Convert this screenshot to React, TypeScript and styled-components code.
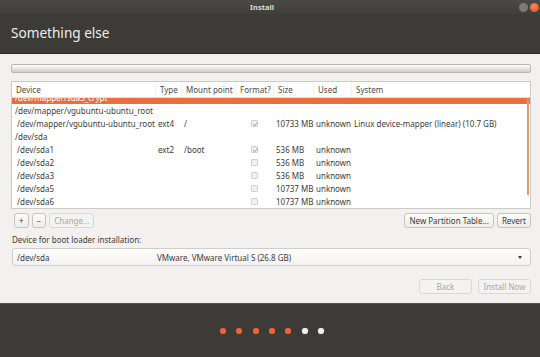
import { useLayoutEffect, useRef } from 'react'
import styled, { createGlobalStyle } from 'styled-components'

const GlobalStyle = createGlobalStyle`
  html, body {
    margin: 0;
    padding: 0;
    background: #3c3b37;
  }
  * {
    box-sizing: border-box;
  }
`

const Window = styled.div`
  width: 540px;
  height: 357px;
  display: flex;
  flex-direction: column;
  font-family: 'Noto Sans', 'Liberation Sans', sans-serif;
  overflow: hidden;
`

const TitleBar = styled.div`
  position: relative;
  height: 14px;
  display: flex;
  align-items: center;
  justify-content: center;
  padding-right: 16px;
  background: linear-gradient(#4a4945, #403f3b);
  color: #dfdbd2;
  font-size: 7.5px;
  font-weight: bold;
`

const WinButtons = styled.div`
  position: absolute;
  right: 1px;
  top: 2.5px;
  display: flex;
  gap: 2px;
`

const WinDot = styled.span<{ $close?: boolean }>`
  width: 9px;
  height: 9px;
  border-radius: 50%;
  background: ${p => (p.$close ? 'radial-gradient(circle at 40% 35%, #f48a5c, #d9491c)' : '#7b7a76')};
`

const Header = styled.div`
  height: 40px;
  display: flex;
  align-items: center;
  padding: 0 0 2px 11px;
  background: #3c3b37;
  color: #efeeea;
  font-size: 13.6px;
  border-bottom: 1px solid #2c2b28;
`

const Content = styled.div`
  flex: 1;
  background: #f2f1f0;
  padding: 10px 9px 0 11px;
  display: flex;
  flex-direction: column;
`

const PartBar = styled.div`
  height: 9px;
  border: 1px solid #b8b6b2;
  border-radius: 2px;
  background: linear-gradient(#ffffff, #e8e7e5 50%, #cfcdc9);
  margin-bottom: 8px;
`

const Table = styled.div`
  position: relative;
  height: 128px;
  background: #ffffff;
  border: 1px solid #cdcbc8;
  display: flex;
  flex-direction: column;
  font-size: 8px;
  color: #3c3c3c;
`

const cols = '143px 26px 54px 38px 40px 38px 1fr'

const HeadRow = styled.div`
  display: grid;
  grid-template-columns: ${cols};
  height: 16px;
  align-items: center;
  border-bottom: 1px solid #e3e1de;
  color: #4c4c4c;
`

const HeadCell = styled.div<{ $sep?: boolean }>`
  padding-left: 4px;
  height: 100%;
  display: flex;
  align-items: center;
  border-left: ${p => (p.$sep ? '1px solid #f1f0ee' : 'none')};
`

const Body = styled.div`
  flex: 1;
  overflow: hidden;
`

const Row = styled.div<{ $selected?: boolean }>`
  display: grid;
  grid-template-columns: ${cols};
  height: 13px;
  align-items: center;
  background: ${p => (p.$selected ? '#e9703e' : 'transparent')};
  color: ${p => (p.$selected ? '#ffffff' : '#3c3c3c')};
  white-space: nowrap;
`

const Cell = styled.div<{ $indent?: boolean }>`
  padding-left: ${p => (p.$indent ? '5px' : '3px')};
  overflow: visible;
`

const Check = styled.span<{ $checked?: boolean }>`
  display: block;
  margin-left: 13px;
  width: 7px;
  height: 7px;
  border: 1px solid #d4d2cf;
  border-radius: 1px;
  background: #f1f0ef;
  position: relative;
  &::after {
    content: ${p => (p.$checked ? "''" : 'none')};
    position: absolute;
    left: 1.5px;
    top: 0px;
    width: 2px;
    height: 3.5px;
    border: solid #b4b2ae;
    border-width: 0 1px 1px 0;
    transform: rotate(40deg);
  }
`

const ScrollThumb = styled.div`
  position: absolute;
  right: 1px;
  top: 17px;
  width: 2px;
  height: 96px;
  background: #e39a73;
`

const ButtonRow = styled.div`
  display: flex;
  align-items: center;
  gap: 3px;
  padding: 4px 0 0 3px;
`

const Spacer = styled.div`
  flex: 1;
`

const Button = styled.button<{ $w?: number; $disabled?: boolean }>`
  height: 15px;
  min-width: ${p => (p.$w ? `${p.$w}px` : 'auto')};
  padding: 0 4px;
  font-family: inherit;
  font-size: 8px;
  color: ${p => (p.$disabled ? '#a9a7a4' : '#3c3c3c')};
  border: 1px solid ${p => (p.$disabled ? '#dad8d5' : '#c6c4c0')};
  border-radius: 3px;
  background: ${p => (p.$disabled ? '#f4f3f2' : 'linear-gradient(#fbfbfa, #eeedeb)')};
  display: flex;
  align-items: center;
  justify-content: center;
`

const Label = styled.div`
  font-size: 8px;
  color: #3c3c3c;
  margin: 6px 0 3px 1px;
`

const Combo = styled.div`
  height: 18px;
  margin-left: 1px;
  border: 1px solid #d0ceca;
  border-radius: 3px;
  background: linear-gradient(#fdfdfc, #f3f2f1);
  display: grid;
  grid-template-columns: 140px 1fr 12px;
  align-items: center;
  font-size: 8px;
  color: #3c3c3c;
  padding-left: 4px;
`

const Arrow = styled.span`
  width: 0;
  height: 0;
  border-left: 2.5px solid transparent;
  border-right: 2.5px solid transparent;
  border-top: 3px solid #3c3c3c;
`

const NavRow = styled.div`
  display: flex;
  justify-content: flex-end;
  gap: 6px;
  margin-top: 13px;
`

const Footer = styled.div`
  height: 54px;
  background: #3c3b37;
  display: flex;
  justify-content: center;
  align-items: center;
  gap: 10.4px;
  padding: 0 0 0 4px;
  border-top: 1px solid #55544f;
`

const Dot = styled.span<{ $done?: boolean }>`
  width: 6px;
  height: 6px;
  border-radius: 50%;
  background: ${p => (p.$done ? '#e9673a' : '#eeeeec')};
  box-shadow: 0 0 1px ${p => (p.$done ? '#b2401a' : '#bbbbbb')};
`

type Part = {
  dev: string
  indent?: boolean
  type?: string
  mount?: string
  format?: 'on' | 'off'
  size?: string
  used?: string
  system?: string
  selected?: boolean
}

const parts: Part[] = [
  { dev: '/dev/mapper/sda3_crypt', selected: true },
  { dev: '/dev/mapper/vgubuntu-ubuntu_root' },
  {
    dev: '/dev/mapper/vgubuntu-ubuntu_root',
    indent: true,
    type: 'ext4',
    mount: '/',
    format: 'on',
    size: '10733 MB',
    used: 'unknown',
    system: 'Linux device-mapper (linear) (10.7 GB)',
  },
  { dev: '/dev/sda' },
  { dev: '/dev/sda1', indent: true, type: 'ext2', mount: '/boot', format: 'on', size: '536 MB', used: 'unknown' },
  { dev: '/dev/sda2', indent: true, format: 'off', size: '536 MB', used: 'unknown' },
  { dev: '/dev/sda3', indent: true, format: 'off', size: '536 MB', used: 'unknown' },
  { dev: '/dev/sda5', indent: true, format: 'off', size: '10737 MB', used: 'unknown' },
  { dev: '/dev/sda6', indent: true, format: 'off', size: '10737 MB', used: 'unknown' },
]

const headers = ['Device', 'Type', 'Mount point', 'Format?', 'Size', 'Used', 'System']

function PartitionTable() {
  const bodyRef = useRef<HTMLDivElement>(null)

  useLayoutEffect(() => {
    if (bodyRef.current) bodyRef.current.scrollTop = 7
  }, [])

  return (
    <Table>
      <HeadRow>
        {headers.map((h, i) => (
          <HeadCell key={h} $sep={i > 0}>
            {h}
          </HeadCell>
        ))}
      </HeadRow>
      <Body ref={bodyRef}>
        {parts.map((p, i) => (
          <Row key={i} $selected={p.selected}>
            <Cell $indent={p.indent}>{p.dev}</Cell>
            <Cell>{p.type}</Cell>
            <Cell>{p.mount}</Cell>
            <Cell>{p.format && <Check $checked={p.format === 'on'} />}</Cell>
            <Cell>{p.size}</Cell>
            <Cell>{p.used}</Cell>
            <Cell>{p.system}</Cell>
          </Row>
        ))}
      </Body>
      <ScrollThumb />
    </Table>
  )
}

export default function App() {
  return (
    <>
      <GlobalStyle />
      <Window>
        <TitleBar>
          Install
          <WinButtons>
            <WinDot />
            <WinDot $close />
          </WinButtons>
        </TitleBar>
        <Header>Something else</Header>
        <Content>
          <PartBar />
          <PartitionTable />
          <ButtonRow>
            <Button $w={13}>+</Button>
            <Button $w={13}>−</Button>
            <Button $disabled>Change...</Button>
            <Spacer />
            <Button>New Partition Table...</Button>
            <Button>Revert</Button>
          </ButtonRow>
          <Label>Device for boot loader installation:</Label>
          <Combo>
            <span>/dev/sda</span>
            <span>VMware, VMware Virtual S (26.8 GB)</span>
            <Arrow />
          </Combo>
          <NavRow>
            <Button $w={53} $disabled>
              Back
            </Button>
            <Button $w={53} $disabled>
              Install Now
            </Button>
          </NavRow>
        </Content>
        <Footer>
          {[0, 1, 2, 3, 4, 5, 6].map(i => (
            <Dot key={i} $done={i < 5} />
          ))}
        </Footer>
      </Window>
    </>
  )
}
